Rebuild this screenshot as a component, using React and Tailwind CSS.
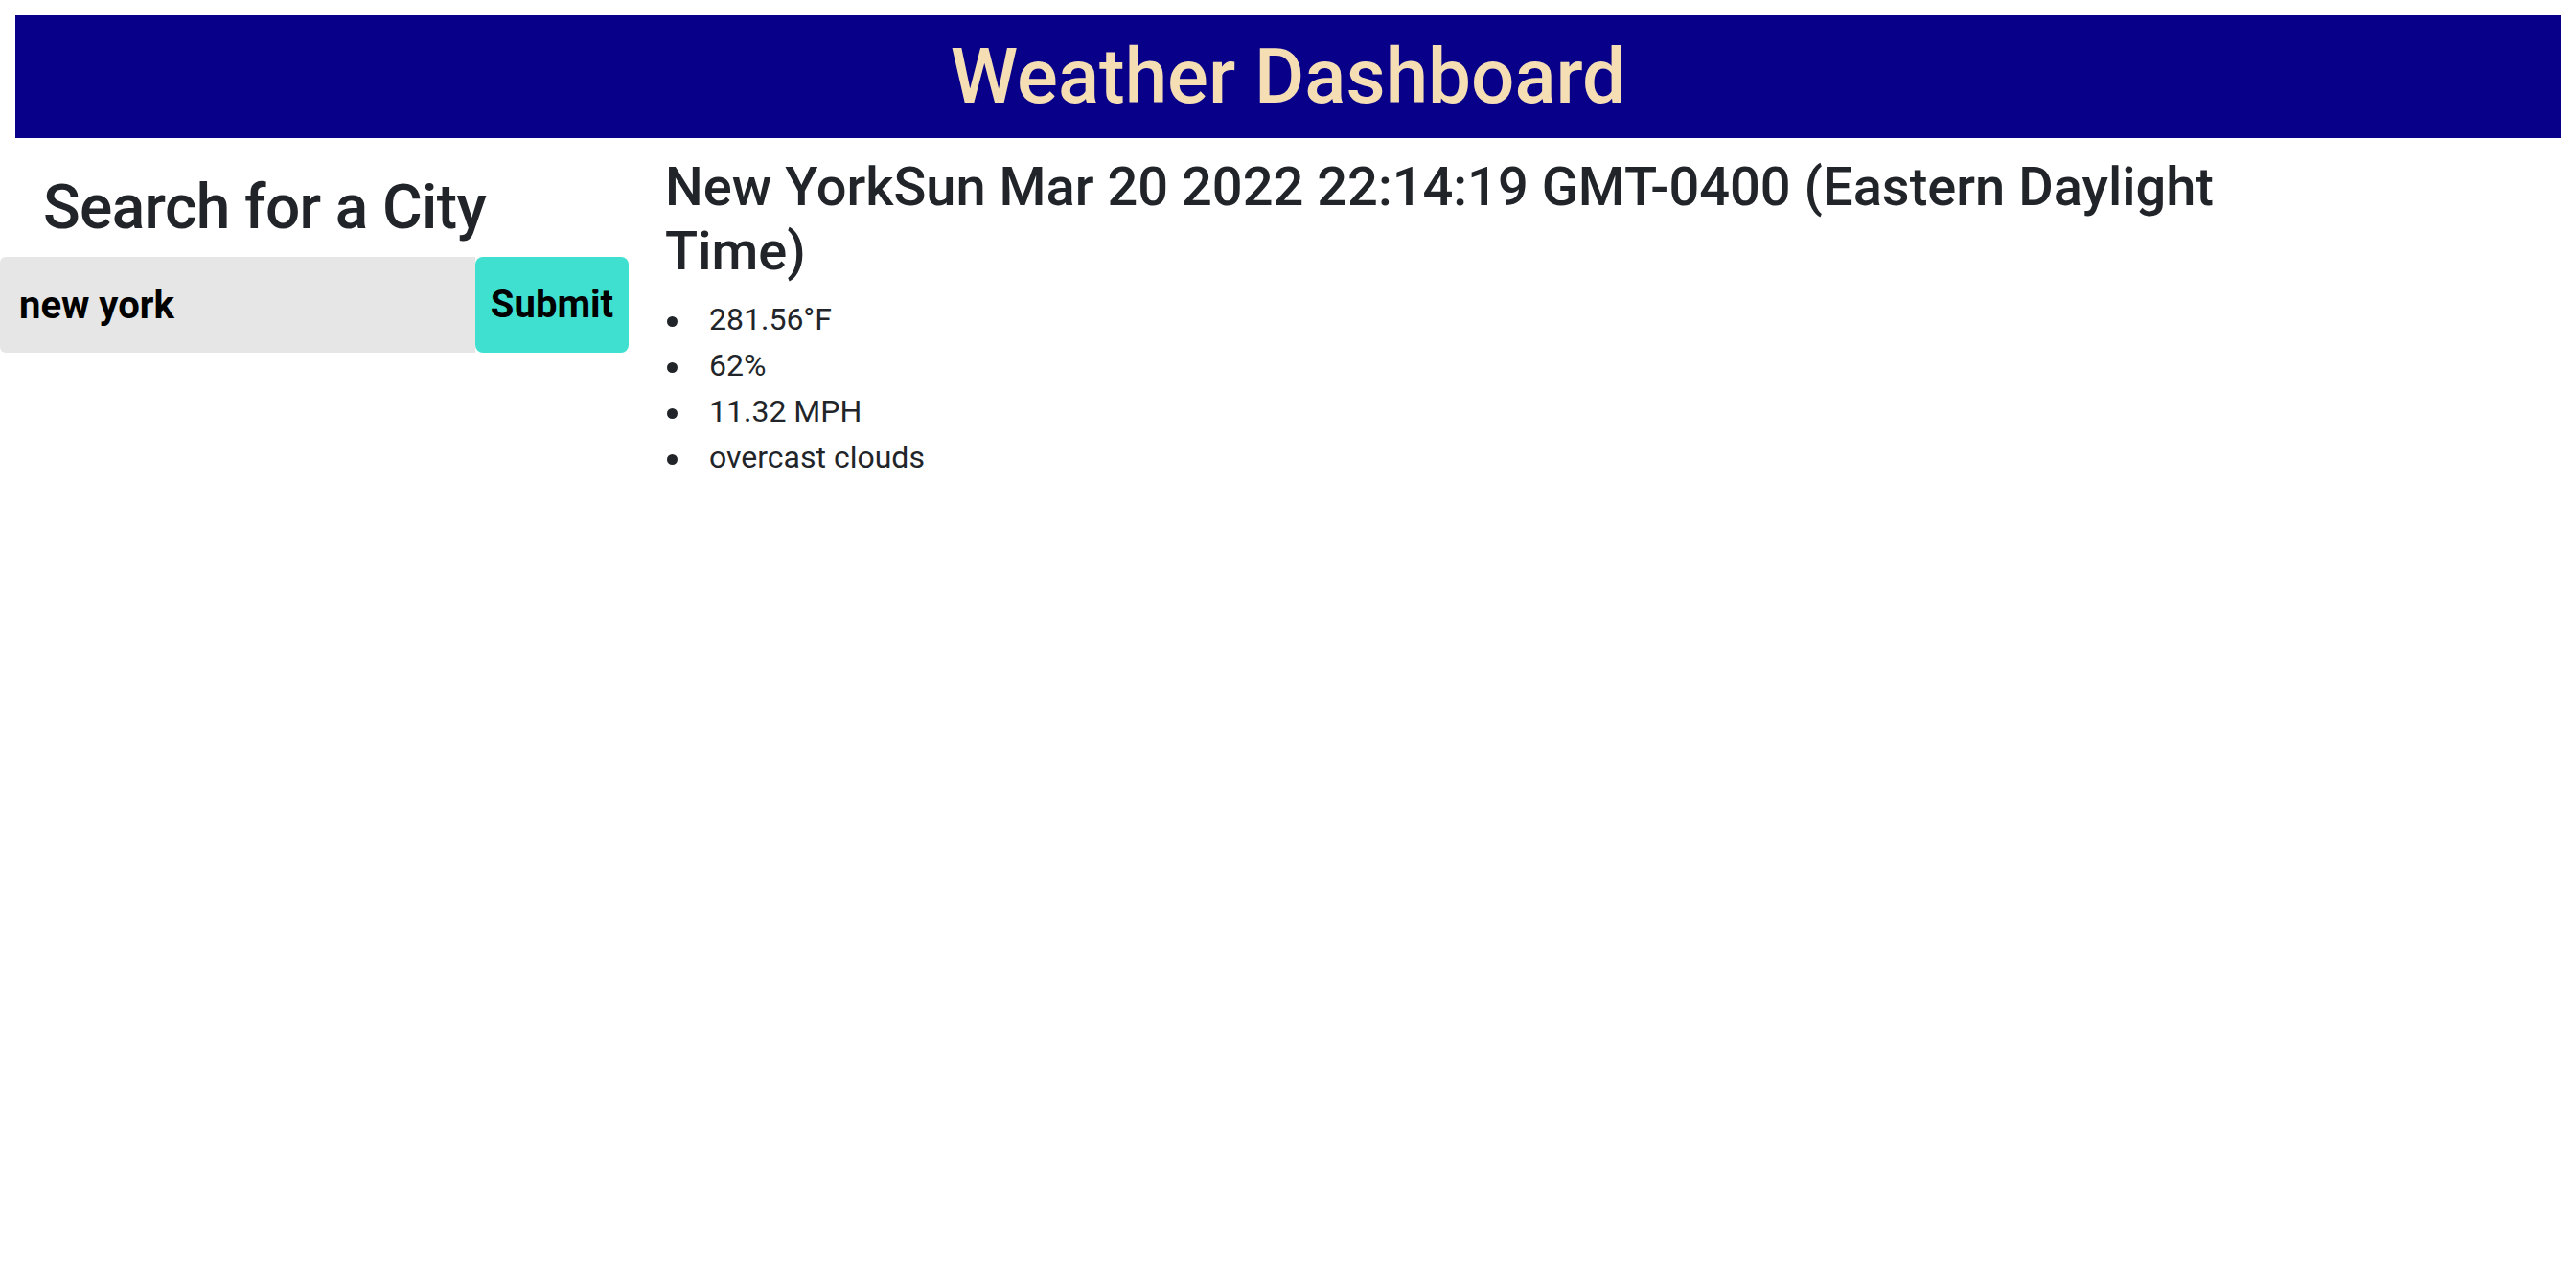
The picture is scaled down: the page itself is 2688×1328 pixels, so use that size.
const items = ["281.56°F", "62%", "11.32 MPH", "overcast clouds"];

export default function App() {
  return (
    <div className="min-h-screen bg-white font-['Roboto','Liberation_Sans',sans-serif] text-[#212529]">
      <header className="mx-4 mt-4 bg-[#080088] py-4 text-center">
        <h1 className="text-[80px] font-medium leading-[96px] text-[#F5DEB3]">
          Weather Dashboard
        </h1>
      </header>
      <div className="flex">
        <aside className="w-[694px] shrink-0">
          <h2 className="mb-[13px] mt-[34px] pl-[45px] text-[64px] font-medium leading-[77px] tracking-[-0.01em]">
            Search for a City
          </h2>
          <form className="flex" onSubmit={(e) => e.preventDefault()}>
            <input
              type="text"
              readOnly
              value="new york"
              className="h-[100px] w-[496px] rounded-l-[6px] bg-[#e6e6e6] pl-[20px] font-['Roboto',sans-serif] text-[40px] font-bold text-black outline-none"
            />
            <button
              type="submit"
              className="h-[100px] w-[160px] rounded-[8px] bg-[#40e0d0] font-['Roboto',sans-serif] text-[40px] font-bold text-black"
            >
              Submit
            </button>
          </form>
        </aside>
        <main className="w-[1700px] pt-[18px]">
          <h3 className="mb-[13px] text-[56px] font-medium leading-[67px]">
            New YorkSun Mar 20 2022 22:14:19 GMT-0400 (Eastern Daylight Time)
          </h3>
          <ul className="text-[32px] leading-[48px]">
            {items.map((t) => (
              <li key={t} className="flex items-center">
                <span className="flex w-[46px] shrink-0 items-center pl-[2px]">
                  <span className="mt-[4px] h-[11px] w-[11px] rounded-full bg-[#212529]" />
                </span>
                <span>{t}</span>
              </li>
            ))}
          </ul>
        </main>
      </div>
    </div>
  );
}
